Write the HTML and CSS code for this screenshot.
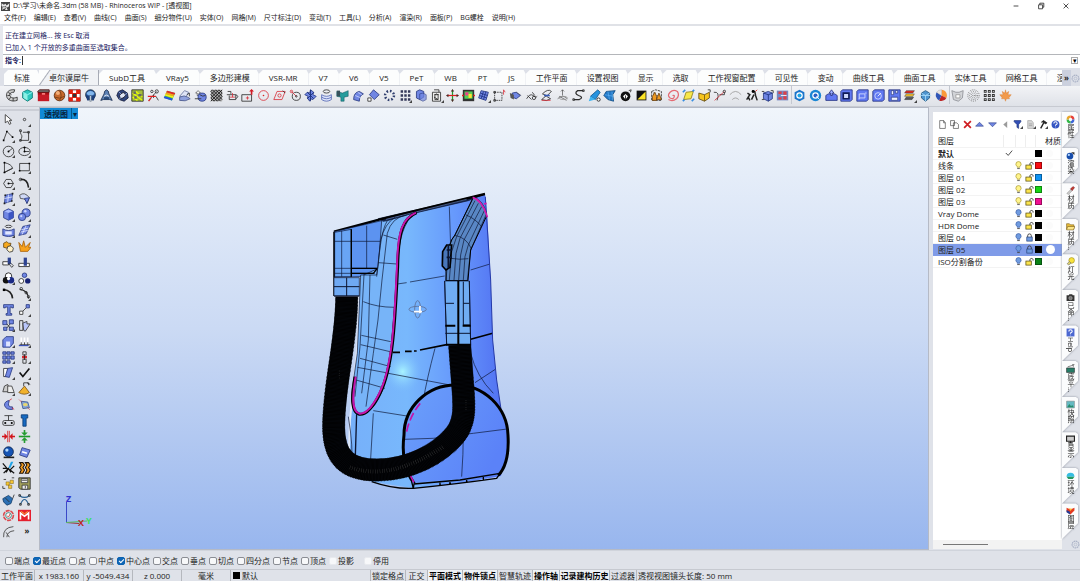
FILE: index.html
```html
<!DOCTYPE html>
<html lang="zh-CN">
<head>
  <meta charset="UTF-8" />
  <meta name="viewport" content="width=device-width, initial-scale=1" />
  <title>Rhinoceros WIP</title>
  <link rel="stylesheet" href="styles.css">
</head>
<body>
  <!-- Shared icons -->
  <svg class="sprite">
    <symbol id="bulb-on" viewBox="0 0 8 10"><path d="M2.500 7V6C1 5 1 4 1 3.500a3 3 0 0 1 6 0C7 4 7 5 5.500 6v1z" fill="#fff48a" stroke="#a89630" stroke-width=".8"/><path d="M2.500 8.500h3" stroke="#555"/></symbol>
    <symbol id="bulb-off" viewBox="0 0 8 10"><path d="M2.500 7V6C1 5 1 4 1 3.500a3 3 0 0 1 6 0C7 4 7 5 5.500 6v1z" fill="#6f9be0" stroke="#3b5fa8" stroke-width=".8"/><path d="M2.500 8.500h3" stroke="#444"/></symbol>
    <symbol id="lock-open" viewBox="0 0 10 10"><path d="M5.500 5V3a1.800 1.800 0 0 1 3.500 0v1" fill="none" stroke="#333"/><rect x="1" y="4.500" width="6" height="4.500" fill="#fbe44c" stroke="#554a10" stroke-width=".8"/></symbol>
    <symbol id="lock-shut" viewBox="0 0 10 10"><path d="M3 5V3a2 2 0 0 1 4 0v2" fill="none" stroke="#333"/><rect x="2" y="4.500" width="6" height="4.500" fill="#6f9be0" stroke="#2c4780" stroke-width=".8"/></symbol>
    <symbol id="gear" viewBox="0 0 16 16"><circle cx="8" cy="8" r="6" fill="none" stroke="#aab2c6" stroke-width="2" stroke-dasharray="3 1"/><circle cx="8" cy="8" r="2.500" fill="none" stroke="#aab2c6"/></symbol>
  </svg>

  <header class="titlebar">
    <svg class="logo" viewBox="0 0 16 16"><rect width="16" height="16" fill="#444"/><path d="M1 2l4 3 3-2 2 3 5-4-1 6-4 2 2 4H8l-2-3-4 3 1-5-2-2z" fill="#e8e8e8"/><path d="M3 8l3 1 2-2 1 3-2 3" fill="none" stroke="#111"/></svg>
    <h1>D:\学习\未命名.3dm (58 MB) - Rhinoceros WIP - [透视图]</h1>
    <div class="window-buttons">
      <button aria-label="最小化"><svg viewBox="0 0 10 10"><path d="M2 5h6"/></svg></button>
      <button aria-label="还原"><svg viewBox="0 0 10 10"><path d="M2 3.500h5v5H2zM3.500 3.500v-2h5v5H7"/></svg></button>
      <button aria-label="关闭"><svg viewBox="0 0 10 10"><path d="M2 2l6 6M8 2L2 8"/></svg></button>
    </div>
  </header>

  <nav class="menubar">
    <a href="#">文件(F)</a><a href="#">编辑(E)</a><a href="#">查看(V)</a><a href="#">曲线(C)</a><a href="#">曲面(S)</a><a href="#">细分物件(U)</a><a href="#">实体(O)</a><a href="#">网格(M)</a><a href="#">尺寸标注(D)</a><a href="#">变动(T)</a><a href="#">工具(L)</a><a href="#">分析(A)</a><a href="#">渲染(R)</a><a href="#">面板(P)</a><a href="#">BG螺栓</a><a href="#">说明(H)</a>
  </nav>

  <section class="command">
    <p>正在建立网格... 按 Esc 取消</p>
    <p>已加入 1 个开放的多重曲面至选取集合。</p>
    <div class="prompt">
      <label for="command-input">指令:</label>
      <input type="text" id="command-input" autocomplete="off" />
      <button aria-label="滚动">▾</button>
    </div>
  </section>

  <div class="tabs">
    <div class="tab-list">
      <button class="cjk">标准</button>
      <button class="cjk active">卓尔谟犀牛</button>
      <button>SubD工具</button>
      <button>VRay5</button>
      <button class="cjk">多边形建模</button>
      <button>VSR-MR</button>
      <button>V7</button>
      <button>V6</button>
      <button>V5</button>
      <button>PeT</button>
      <button>WB</button>
      <button>PT</button>
      <button>JS</button>
      <button class="cjk">工作平面</button>
      <button class="cjk">设置视图</button>
      <button class="cjk">显示</button>
      <button class="cjk">选取</button>
      <button class="cjk">工作视窗配置</button>
      <button class="cjk">可见性</button>
      <button class="cjk">变动</button>
      <button class="cjk">曲线工具</button>
      <button class="cjk">曲面工具</button>
      <button class="cjk">实体工具</button>
      <button class="cjk">网格工具</button>
      <button class="cjk">渲染</button>
    </div>
    <button class="tabs-more">»</button>
    <button class="tabs-gear" aria-label="选项"><svg><use href="#gear"/></svg></button>
  </div>

  <div class="toolbar">
    <div class="group group-main">
      <button><svg viewBox="0 0 16 16"><path class="k" d="M12 1C5 0 1 4 2 9c1 5 7 7 13 5v-4c-4 2-8 1-9-2-1-2 1-4 5-4z" fill="#ccc"/><path class="k" d="M4 4l4 3M3 8l3 0M5 13l2-3M10 11v4"/></svg></button>
      <button><svg viewBox="0 0 16 16"><path d="M8 1l6 3v7l-6 4-6-4V4z" fill="#2cc7bd" stroke="#08746f"/><path d="M2 4l6 3 6-3" fill="none" stroke="#aff"/><path d="M3 5l5 2v7l-5-3z" fill="#8ff0e4"/></svg></button>
      <button><svg viewBox="0 0 16 16"><path d="M1 3h14v12H1z" fill="#c51a26"/><path d="M1 3l2-2h12v3H1z" fill="#777" stroke="#400"/><path d="M1 6h14" stroke="#800"/><rect x="6" y="5" width="4" height="2" fill="#ff8080"/></svg></button>
      <button><svg viewBox="0 0 16 16"><circle cx="8" cy="8" r="6.500" fill="#c7692d" stroke="#5a2a0a"/><circle cx="6" cy="5" r="2.500" fill="#f3ae78"/><path d="M2 10q6 3 12-1M8 2q4 6 0 12" stroke="#743b14" fill="none"/></svg></button>
      <button><svg viewBox="0 0 16 16"><path d="M1 1h14v14H1z" fill="#fff" stroke="#500"/><path d="M1 1h5v4h4V1h5v5h-4v4h4v5h-5v-4H6v4H1v-5h4V6H1z" fill="#e4200e"/><path d="M6 6h4v4H6z" fill="#333"/></svg></button>
      <button><svg viewBox="0 0 16 16"><circle cx="8" cy="7" r="6" fill="#2b5fa8" stroke="#123"/><path d="M3 5q5-5 10 0l-2 3H5z" fill="#83b7ec"/><path d="M2 8h4v6H4zM10 8h4l-2 6h-2z" fill="#1d3e78"/><path d="M7 8h2v7H7z" stroke="#123" stroke-width=".5" fill="#dce9f8"/></svg></button>
      <button><svg viewBox="0 0 16 16"><path d="M8 1q3 1 3 5l4 8-3-1H4l-3 1 4-8q0-4 3-5z" fill="#5b80b4" stroke="#12264a"/><path d="M5 9q3-3 6 0" stroke="#fff" fill="none"/><path d="M5 10h6v3H5z" fill="#274775"/></svg></button>
      <button><svg viewBox="0 0 16 16"><path d="M3 3l5-2 6 4 1 6-5 4-6-2-3-5z" fill="#31467e" stroke="#121a38"/><ellipse cx="8" cy="8" rx="4" ry="3" transform="rotate(-40 8 8)" fill="#dfe6f5" stroke="#112"/><path d="M3 3l3 3M14 5l-3 2M4 13l2-3" stroke="#9ab1e8"/></svg></button>
      <button><svg viewBox="0 0 16 16"><path d="M1 1h14v14H1z" fill="#a5bd3c" stroke="#222"/><path d="M2 5l12 9M6 3l8 7M2 10l6 4" stroke="#ef0" stroke-width="1.500"/><path d="M3 3h3v3H3zM9 6h4v3H9zM4 9h3v3H4z" fill="#666"/></svg></button>
      <button><svg viewBox="0 0 16 16"><path class="k" d="M2 14L12 3M8 7v4M11 9l3 5"/><path d="M1 9h10M5 11l-3 4" stroke="#e02020" stroke-width="1.500"/><circle class="k" cx="12" cy="3" r="2"/><circle class="k" cx="6" cy="3" r="1.500"/></svg></button>
      <button><svg viewBox="0 0 16 16"><path d="M5 2l10 3-4 9L1 11z" fill="#39ca42"/><path d="M5 2l10 3-1 2L4 4z" fill="#e9202c"/><path d="M4 4l10 3-1 2L3 6z" fill="#ff9b18"/><path d="M3 6l10 3-1 2L2 8z" fill="#f4ec20"/><path d="M2 9l10 3-1 2-10-3z" fill="#274ce8"/></svg></button>
      <button><svg viewBox="0 0 16 16"><path d="M2 9l6-7 5 2-4 7z" fill="#dfe5f6" stroke="#66749d"/><path d="M2 10q6-3 10 0l3 2q-6 4-13 2z" fill="#8fa1dd" stroke="#4c5a8a"/><path d="M11 7l3-2v4" class="k"/></svg></button>
      <button><svg viewBox="0 0 16 16"><path d="M2 5l3-3 3 3H6v3H4V5z" fill="#fff" stroke="#222" stroke-width=".7"/><circle class="b" cx="10" cy="10" r="5"/><path class="k" d="M1 12h8M7 7q4 3 7 1"/></svg></button>
      <button><svg viewBox="0 0 16 16"><path d="M1 1h14v14H1z" fill="#aaa"/><path d="M1 3L3 1M1 7l6-6M1 11L11 1M1 15L15 1M5 15L15 5M9 15l6-6M1 11l4 4M1 7l8 8M1 3l12 12M3 1l12 12M7 1l8 8M11 1l4 4" stroke="#111"/></svg></button>
      <button><svg viewBox="0 0 16 16"><path class="k" d="M2 3h4v3M1 7h11v6H4V8M12 7q5 2 0 5"/><path class="r" d="M5 10h6M8 5v5"/></svg></button>
      <button><svg viewBox="0 0 16 16"><path class="k" d="M1 7h12v8H1z"/><path class="r" d="M6 11h4M8 9v4"/><path d="M12 7V3h-2l3-3 3 3h-2v4z" fill="#d31925"/></svg></button>
      <button><svg viewBox="0 0 16 16"><circle class="r" cx="8" cy="8" r="6"/><circle cx="8" cy="8" r="1" fill="#d22"/></svg></button>
      <button><svg viewBox="0 0 16 16"><path class="r" d="M5 3h10l-4 10H1z"/><circle class="r" cx="8" cy="8" r="2"/><path class="k" d="M12 2l3 3"/></svg></button>
      <button><svg viewBox="0 0 16 16"><circle class="k" cx="9" cy="9" r="5"/><path class="r" d="M3 3l6 6"/><circle class="r" cx="3" cy="3" r="1.500"/><circle class="k" cx="9" cy="9" r="1"/></svg></button>
      <button><svg viewBox="0 0 16 16"><path class="b" d="M8 1l4 3-1 3 4 2-4 4-3-1-1 3-3-4 1-2-4-2 3-3 3 1z"/><path d="M4 4l8 8M12 4l-8 8M8 1v14" stroke="#152a75"/></svg></button>
      <button><svg viewBox="0 0 16 16"><ellipse class="k" cx="8" cy="3" rx="4" ry="2"/><path d="M2 7q6 4 12 0v6q-6 4-12 0z" fill="#dce3fb" stroke="#5266b3"/><path d="M2 10q6 4 12 0" stroke="#5266b3" fill="none"/></svg></button>
      <button><svg viewBox="0 0 16 16"><path d="M1 3l7 2 7-3v7l-5 1v5H6v-5l-5-1z" fill="#269c9c" stroke="#0a4f59" stroke-width=".6"/><path d="M1 2h4v7H1z" fill="#37525c"/></svg></button>
      <button><svg viewBox="0 0 16 16"><path class="b" d="M2 13q0-9 7-10l5 3q-5 2-5 9z"/><path d="M4 8l7 3M7 4l5 3" stroke="#cbd5ff"/></svg></button>
      <button><svg viewBox="0 0 16 16"><path class="b" d="M8 1l7 6-6 6-6-6z"/><path class="k" d="M1 11h4v4H1z" fill="#fff"/></svg></button>
      <button><svg viewBox="0 0 16 16"><circle cx="8" cy="8" r="5.500" fill="none" stroke="#31406f" stroke-width="3" stroke-dasharray="2 2.300"/></svg></button>
      <button class="more"><svg viewBox="0 0 16 16"><path d="M2 3h12M2 8h12M2 13h12" stroke="#34395a" stroke-width="3" stroke-dasharray="3 1.500"/></svg></button>
      <button><svg viewBox="0 0 16 16"><path class="b" d="M3 3l4-2 5 2v7l-5 3-4-2z"/><path class="b" d="M7 6l4-1 4 2v6l-4 2-4-2z" opacity=".7"/></svg></button>
      <button class="more"><svg viewBox="0 0 16 16"><path class="k" d="M3 4h10v11H3zM5 1h6v3M6 8q2-4 4 0v5H6z" fill="#eee"/><path d="M5 7h6M5 10l5 3" stroke="#222"/></svg></button>
      <button><svg viewBox="0 0 16 16"><path d="M8 1v14" stroke="#219b2c" stroke-width="1.500"/><path d="M1 8h14" stroke="#db2222" stroke-width="1.500"/><path d="M8 0l2 3H6zM8 16l2-3H6zM0 8l3-2v4zM16 8l-3-2v4z" fill="#4c2a25"/></svg></button>
      <button><svg viewBox="0 0 16 16"><path d="M1 1h14v14H1z" fill="#333"/><path d="M3 3h10v9H3z" fill="#51d156"/><path d="M4 4h4v4H4z" fill="#ee3f8c"/><path d="M8 6h4v5H8z" fill="#ffe137"/><path d="M0 7h2v2H0zM14 7h2v2h-2z" fill="#e22"/></svg></button>
      <button class="more"><svg viewBox="0 0 16 16"><path class="b" d="M5 2l9 2-3 10-9-3z"/><path d="M4 5l9 3M3 8l9 3M8 3l-3 9M11 3L8 13" stroke="#1f3183"/></svg></button>
      <button><svg viewBox="0 0 16 16"><path class="k" d="M2 4h9v10H2z" stroke-dasharray="2 1"/><path class="k" d="M1 3h2v2H1zM1 13h2v2H1z"/><path class="r" d="M13 1v6M13 1l2 3"/></svg></button>
      <button><svg viewBox="0 0 16 16"><path class="b" d="M4 5l5-1 5 4-5 4-5-2z"/><path d="M1 5l5 2v6l-4-2z" fill="#555"/><path class="k" d="M9 4l6 4" opacity=".5"/></svg></button>
      <button><svg viewBox="0 0 16 16"><path class="k" d="M2 12q4-7 8-4t5 1M3 8l5 5M9 4l3 4"/><circle class="k" cx="11" cy="11" r="2"/></svg></button>
      <button><svg viewBox="0 0 16 16"><path class="k" d="M3 6q7-7 11-3L8 9l5 3q-5 4-11 1l6-5z"/><path class="r" d="M2 14h11"/><path d="M5 8h7" stroke="#345cba" stroke-width="2"/></svg></button>
      <button><svg viewBox="0 0 16 16"><path class="k" d="M8 1v7M6 3l2-2 2 2M2 12q6-6 12 0M4 9l9 5" opacity=".7"/><ellipse cx="9" cy="11" rx="5" ry="2" fill="none" stroke="#999"/></svg></button>
      <button><svg viewBox="0 0 16 16"><path class="k" d="M14 2H7Q2 5 8 8q7 2 1 5H2" stroke-width="1.500"/><path class="k" d="M13 1h2v2h-2zM1 12h2v2H1z"/></svg></button>
      <button><svg viewBox="0 0 16 16"><path d="M12 1l3 3-6 9-6-4z" fill="#2492df" stroke="#12588c"/><path d="M3 9l6 4-8 2z" fill="#3cb3f2"/><circle cx="13" cy="13" r="2" fill="#fff" stroke="#111"/></svg></button>
      <button><svg viewBox="0 0 16 16"><path d="M4 3l11-1-3 5 1 8-7-2-5-5z" fill="#2379c8" stroke="#0e477e"/><path d="M2 7l11 2M6 3l2 10M11 3l1 11" stroke="#77c5ff" stroke-width=".6"/></svg></button>
      <button><svg viewBox="0 0 16 16"><circle cx="8" cy="9" r="6" fill="#111"/><path d="M5 9l3-3 3 3-3 4z" fill="#fff"/><path d="M8 8v5" stroke="#111"/><path class="k" d="M12 2l3-1-1 3"/></svg></button>
      <button><svg viewBox="0 0 16 16"><path d="M2 2h12v12H2z" fill="#111"/><path d="M13 3v10H3z" fill="#fbe326"/></svg></button>
      <button><svg viewBox="0 0 16 16"><path class="k" d="M2 3l5-2 7 2v11H2zM5 8h5M5 4v4" stroke-dasharray="3 1"/><path d="M3 9l3-5 2 5v5H3zM11 5l3 8H8z" fill="#ef9a22" stroke="#6c4110"/></svg></button>
      <button><svg viewBox="0 0 16 16"><path d="M8 8q3-1 2 2t-5 1q-4-3 0-7t9-1q3 5-1 9-5 4-10 1" fill="none" stroke="#e46a73" stroke-width="1.500"/></svg></button>
      <button><svg viewBox="0 0 16 16"><path d="M5 4l9-1-3 9-9 1z" fill="#f7e74a" stroke="#8b7b18"/><path d="M1 4l3-3M12 15l3-3M1 15l2-2M13 3l2-2" stroke="#398ee1" stroke-width="2"/></svg></button>
      <button><svg viewBox="0 0 16 16"><path d="M1 5l7 2 6-3v7l-6 4-7-3z" fill="#f6c51f" stroke="#5f4812"/><path d="M8 7v8" stroke="#6f5612"/><path class="k" d="M12 1h3v3"/></svg></button>
      <button><svg viewBox="0 0 16 16"><path class="k" d="M1 4q8-1 4 10M8 7h6v-3"/><path class="r" d="M2 14L14 3"/><circle class="k" cx="14" cy="3" r="1.500"/></svg></button>
      <button><svg viewBox="0 0 16 16"><path d="M1 7q7-8 14 0M4 13q4-4 8 0" fill="none" stroke="#999"/></svg></button>
      <button><svg viewBox="0 0 16 16"><path d="M3 5l3 2-2 3 2 4M6 7L2 13M9 3h3l1 5 2 6M11 7l-3 6" fill="none" stroke="#222" stroke-width="1.800"/><circle cx="10" cy="3" r="1.800"/><path d="M13 3l2-2" stroke="#d22"/></svg></button>
      <button><svg viewBox="0 0 16 16"><path class="b" d="M3 5l6-2 5 2v7l-5 3-6-3z"/><path d="M3 5l6 2 5-2M9 7v8" stroke="#172c78" fill="none"/><path class="k" d="M1 3h3M12 2h3v3M1 13h3"/></svg></button>
      <button><svg viewBox="0 0 16 16"><path d="M1 2h14v12H1z" fill="#7489c4"/><path d="M3 3h4v3H3zM3 10h4v3H3zM9 3h4v4H9zM9 9h4v4H9z" fill="#dd4048"/><path d="M6 8h7" stroke="#fff"/></svg></button>
    </div>
    <div class="group group-solid">
      <button><svg viewBox="0 0 16 16"><path d="M8 1l6 3v8l-6 3-6-3V4z" fill="#1b75cb"/><circle cx="8" cy="8" r="4" fill="#fff"/><circle cx="8" cy="8" r="2.500" fill="#1fa4e4"/></svg></button>
      <button><svg viewBox="0 0 16 16"><circle cx="8" cy="8" r="7" fill="#1b86d4"/><circle cx="8" cy="8" r="4" fill="#fff"/><circle cx="8" cy="8" r="2.500" fill="#2a5fc5"/><path d="M9 9l4 4" stroke="#fff"/></svg></button>
      <button><svg viewBox="0 0 16 16"><path class="v" d="M1 8l3-2h8l3 2v6H1z"/><path d="M8 1l3 4H9v3H7V5H5z" fill="#9fb0ff" stroke="#27347f"/></svg></button>
      <button><svg viewBox="0 0 16 16"><path class="v" d="M1 3l2-2h12v12l-2 2H1z"/><path d="M4 5h7v7H4z" fill="#cdd8fb" stroke="#111b58" stroke-width="2"/></svg></button>
      <button><svg viewBox="0 0 16 16"><path class="v" d="M1 3l2-2h12v12l-2 2H1z"/><path d="M4 6h7v5H4z" fill="none" stroke="#dce3ff"/><path d="M3 12h2M11 5h2" stroke="#dce3ff"/></svg></button>
      <button><svg viewBox="0 0 16 16"><path class="v" d="M1 3l2-2h12v12l-2 2H1z"/><circle cx="7.500" cy="8.500" r="4" fill="none" stroke="#dce3ff"/><path d="M7 9l4-4" stroke="#fff"/></svg></button>
      <button><svg viewBox="0 0 16 16"><path class="v" d="M1 1h14v14H1z"/><path d="M4 2h3v5H4zM9 2h3v3H9zM4 10h8v4H4z" fill="#eef1ff" stroke="#34428d"/></svg></button>
      <button class="more"><svg viewBox="0 0 16 16"><path d="M4 2h10l-2 3H2z" fill="#e02a21" stroke="#333" stroke-width=".6"/><path d="M4 6h10l-2 3H2z" fill="#f5c52d" stroke="#333" stroke-width=".6"/><path d="M4 10h9l-2 3H2z" fill="#555" stroke="#222" stroke-width=".6"/></svg></button>
      <button><svg viewBox="0 0 16 16"><path d="M3 5l5-3 5 3v6l-5 4-5-4z" fill="#4d94cf" stroke="#23577f"/><path d="M1 8h14M3 5l5 3 5-3M8 8v7" stroke="#a7dbfb" fill="none"/></svg></button>
      <button><svg viewBox="0 0 16 16"><path d="M8 8V1a7 7 0 0 1 6 10z" fill="#fa9839"/><path d="M8 8l6 3A7 7 0 0 1 5 14z" fill="#bd2526"/><path d="M8 8l-3 6A7 7 0 0 1 2 4z" fill="#3156b7"/><path d="M8 8L2 4a7 7 0 0 1 6-3z" fill="#e9e3df" stroke="#aaa" stroke-width=".5"/></svg></button>
    </div>
    <div class="group group-extra">
      <button><svg viewBox="0 0 16 16"><path d="M1 2l5 2h4l5-2-1 9-5 4-6-2z" fill="#d2d4d8" stroke="#8b8e94"/><path d="M6 7h5v4H6z" fill="#fff" stroke="#999"/></svg></button>
      <button><svg viewBox="0 0 16 16" fill="none" stroke="#555" stroke-dasharray="1 1.500"><circle cx="8" cy="8" r="7"/><circle cx="8" cy="8" r="5"/><circle cx="8" cy="8" r="3"/><circle cx="8" cy="8" r="1"/></svg></button>
      <button><svg viewBox="0 0 16 16"><path d="M1 3h14M1 8h14M1 13h14" stroke="#333" stroke-width="3.500" stroke-dasharray="3.500 1.500"/><path d="M2 3h13M2 8h13M2 13h13" stroke="#ddd" stroke-dasharray="1.500 3.500"/></svg></button>
      <button><svg viewBox="0 0 16 16"><path d="M8 1l1 4 3-2-1 4h4l-3 4 1 1-4 0-1 3-1-3-4 0 1-1-3-4h4L4 3l3 2z" fill="#f29a4b" stroke="#d77929" stroke-width=".5"/></svg></button>
    </div>
    <div class="group-rest"></div>
  </div>

  <main class="workspace">
    <div class="side-tools">
      <button><svg viewBox="0 0 16 16"><path class="k" d="M4 2v10l3-2 2 4 2-1-2-4h3z" fill="#fff"/></svg></button>
      <button class="more"><svg viewBox="0 0 16 16"><circle class="k" cx="8" cy="8" r="1.500"/></svg></button>

      <button class="more"><svg viewBox="0 0 16 16"><path class="k" d="M2 14L6 3l7 7"/><path d="M1 13h2v2H1zM5 2h2v2H5zM12 9h2v2h-2z"/></svg></button>
      <button class="more"><svg viewBox="0 0 16 16"><path class="k" d="M4 2q-2 3 0 5t-1 7h10V4H6"/><path class="k" d="M2 1h2v2H2zM12 3h2v2h-2zM2 13h2v2H2z"/></svg></button>

      <button class="more"><svg viewBox="0 0 16 16"><circle class="k" cx="8" cy="8" r="6.500"/><path class="k" d="M8 8l5-4"/><circle cx="8" cy="8" r="1.200"/></svg></button>
      <button class="more"><svg viewBox="0 0 16 16"><ellipse class="k" cx="8" cy="8" rx="7" ry="5"/><path class="k" d="M8 8h6M8 8V3"/><circle cx="8" cy="8" r="1.200"/><circle cx="8" cy="3" r="1.200"/></svg></button>

      <button class="more"><svg viewBox="0 0 16 16"><path class="k" d="M3 14V2q9 2 10 7zM3 14l10-5"/><circle cx="3" cy="2" r="1.200"/><circle cx="3" cy="14" r="1.200"/></svg></button>
      <button class="more"><svg viewBox="0 0 16 16"><path class="k" d="M2 3h12v9H2z"/><path d="M1 11h2v2H1zM13 2h2v2h-2z"/></svg></button>

      <button class="more"><svg viewBox="0 0 16 16"><path class="k" d="M5 3h6l3 5-3 5H5L2 8zM8 8h6"/><circle cx="8" cy="8" r="1.200"/></svg></button>
      <button class="more"><svg viewBox="0 0 16 16"><path d="M3 3q9-1 10 10" fill="none" stroke="#222" stroke-width="2"/><circle class="k" cx="3" cy="3" r="1.500"/></svg></button>

      <button class="more"><svg viewBox="0 0 16 16"><path class="b" d="M4 4l9-2-1 9-9 3z"/><path d="M3 8l10-2M8 3l-1 10" stroke="#dfe6ff"/><path d="M3 3h2v2H3zM12 1h2v2h-2zM2 13h2v2H2zM11 10h2v2h-2z" fill="#222"/></svg></button>
      <button class="more"><svg viewBox="0 0 16 16"><path d="M2 4q6-5 12 3l-3 7q0-6-8-6z" fill="#cfd8f6" stroke="#444"/><path class="b" d="M8 8l6-1-3 7z"/></svg></button>

      <button class="more"><svg viewBox="0 0 16 16"><path class="b" d="M2 4l6-3 6 3v8l-6 3-6-3z"/><path d="M3 4l5 2 5-2-5-2z" fill="#a9bcff"/><path d="M8 6l6-2v8l-6 3z" fill="#3a54c4"/></svg></button>
      <button class="more"><svg viewBox="0 0 16 16"><circle class="b" cx="10" cy="6" r="5"/><circle class="b" cx="5" cy="11" r="4.500"/><circle cx="9" cy="4" r="1.500" fill="#cbd6ff"/><circle cx="4" cy="10" r="1.300" fill="#cbd6ff"/></svg></button>

      <button class="more"><svg viewBox="0 0 16 16"><ellipse class="k" cx="8" cy="3" rx="4" ry="1.500"/><path class="b" d="M1 6q7 4 14 0v8q-7 3-14 0z"/><path d="M4 9h8v4H4z" fill="#e2e8ff"/></svg></button>
      <button class="more"><svg viewBox="0 0 16 16"><path class="b" d="M6 3l9-2-5 11-9 2z"/><path d="M4 7l9-2M3 10l9-2M10 2L5 13" stroke="#e1e6ff"/></svg></button>

      <button><svg viewBox="0 0 16 16"><path d="M2 4l4-2 2 2h3l-1 4-4 2-4-1z" fill="#f6a81d" stroke="#694910"/><path d="M7 8l4-1 3 3-1 4-4 1-3-3z" fill="#fff0c6" stroke="#333"/></svg></button>
      <button><svg viewBox="0 0 16 16"><path d="M1 3l4 5 2-7 2 8 6-6-2 6 3 0-4 5H3z" fill="#f8a21c" stroke="#a9620c"/></svg></button>

      <button><svg viewBox="0 0 16 16"><path d="M1 7h7v4H1z" fill="#fff" stroke="#222"/><path d="M7 2h4v8H7z" fill="#2e4492"/><path class="k" d="M8 9l4 5 2-2-4-4"/></svg></button>
      <button><svg viewBox="0 0 16 16"><path d="M1 9h13v4H1z" fill="#fff" stroke="#222"/><path d="M7 2h4v10H7z" fill="#2e4492"/></svg></button>

      <button class="more"><svg viewBox="0 0 16 16"><circle cx="8" cy="5" r="4" fill="#fff" stroke="#111"/><circle cx="5" cy="10" r="4" fill="#111"/><circle cx="11" cy="10" r="4" fill="#1b2a85"/><circle cx="8" cy="8" r="2" fill="#fff"/></svg></button>
      <button><svg viewBox="0 0 16 16"><circle class="b" cx="8" cy="4" r="2.800"/><circle cx="4" cy="11" r="3" fill="#fff" stroke="#222"/><circle cx="12" cy="11" r="3.300" fill="#172274"/></svg></button>

      <button><svg viewBox="0 0 16 16"><path d="M2 3q10 1 11 11" fill="none" stroke="#222" stroke-width="2"/><path d="M1 2h3v3H1z"/></svg></button>
      <button class="more"><svg viewBox="0 0 16 16"><path d="M2 3q10 1 11 11" fill="none" stroke="#222" stroke-width="1.500"/><circle class="k" cx="4" cy="2" r="1.500"/><circle class="k" cx="10" cy="7" r="1.500"/><circle class="k" cx="13" cy="12" r="1.500"/></svg></button>

      <button><svg viewBox="0 0 16 16"><path class="b" d="M2 2h12v4h-2V5h-2v8h2v2H5v-2h2V5H4v1H2z"/></svg></button>
      <button class="more"><svg viewBox="0 0 16 16"><path class="k" d="M2 10h4v4H2zM6 10l4-4" fill="#fff"/><path class="b" d="M10 2h4v4h-4z"/></svg></button>

      <button class="more"><svg viewBox="0 0 16 16"><path class="b" d="M1 2h5v5H1zM9 1h5v5H9zM2 10h4v4H2zM9 10h5v4H9z"/><path class="k" d="M6 6l4 5M10 6l-4 5"/></svg></button>
      <button><svg viewBox="0 0 16 16"><path class="k" d="M2 2h4v12H2z"/><path d="M6 5l5-2v3h4l-6 9-2-1z" fill="#b9c6fa" stroke="#333"/></svg></button>

      <button class="more"><svg viewBox="0 0 16 16"><path class="b" d="M1 6l4-4h9v8l-4 5H1z"/><path d="M5 8h5v6H5z" fill="#dfe5ff"/></svg></button>
      <button class="more"><svg viewBox="0 0 16 16"><path d="M4 3v8M8 3v8M12 3v8" stroke="#fff" stroke-width="2"/><path class="k" d="M2 12h13M4 9v3M8 9v3M12 9v3"/><path d="M1 13h12" stroke="#3b52b9" stroke-width="1.500"/></svg></button>

      <button class="more"><svg viewBox="0 0 16 16"><path class="b" d="M1 1h4v3H1zM6 1h4v3H6zM11 1h4v3h-4zM1 6h4v4H1zM6 6h4v4H6zM11 6h4v4h-4zM1 12h4v3H1zM6 12h4v3H6z"/></svg></button>
      <button class="more"><svg viewBox="0 0 16 16"><path class="k" d="M6 1h4v4H6zM6 10h4v5H6z"/><path d="M5 6h6v3H5z" fill="#d32328"/><path d="M8 4v7" stroke="#222"/></svg></button>

      <button class="more"><svg viewBox="0 0 16 16"><path class="k" d="M2 3h5v10H2z" fill="#fff"/><path class="b" d="M7 3l6-1-4 12-5-1z"/></svg></button>
      <button class="more"><svg viewBox="0 0 16 16"><path d="M2 8l4 5L14 3" fill="none" stroke="#111" stroke-width="2"/></svg></button>

      <button class="more"><svg viewBox="0 0 16 16"><path d="M1 12l2-7 4-2 3 9z" fill="#ccc" stroke="#333"/><path d="M7 5l5 0 3 8H7z" fill="#eee" stroke="#333"/></svg></button>
      <button class="more"><svg viewBox="0 0 16 16"><path d="M1 13l7-8 6 8q-6 4-13 0z" fill="#f1b22c" stroke="#7c551a"/><path class="k" d="M7 5V1h6v3M11 1l4 2"/></svg></button>

      <button><svg viewBox="0 0 16 16"><path class="b" d="M9 3q-6 1-6 6 2 6 10 5v-3q-6 0-5-4z"/><path class="r" d="M9 3l3-2M12 12l3 2"/></svg></button>
      <button><svg viewBox="0 0 16 16"><path d="M4 4l8 1 2 7-8 1z" fill="#87a5d9" stroke="#37568c"/><ellipse cx="9" cy="8" rx="3" ry="2" fill="#e7d770"/><path d="M1 2l4 3M11 11l4 4" stroke="#c33" stroke-dasharray="1 1"/></svg></button>

      <button><svg viewBox="0 0 16 16"><path class="k" d="M3 2h10M8 2v6M1 10q0-2 2-2h10q2 0 2 2v2q0 2-2 2H3q-2 0-2-2z"/><circle cx="4" cy="11" r="1.300"/><circle cx="12" cy="11" r="1.300"/></svg></button>
      <button><svg viewBox="0 0 16 16"><path d="M4 1h8v4h-2v10H6V5H4z" fill="#176ac2" stroke="#0a3970"/></svg></button>

      <button><svg viewBox="0 0 16 16"><path d="M7 1v14M9 1v14" stroke="#d72020"/><path d="M0 7h3V4l4 4-4 4V9H0zM16 7h-3V4L9 8l4 4V9h3z" fill="#d3151b"/></svg></button>
      <button><svg viewBox="0 0 16 16"><path d="M1 8h14" stroke="#1e9a2a" stroke-width="2"/><path d="M7 0v3H4l4 4 4-4H9V0zM7 16v-3H4l4-4 4 4H9v3z" fill="#259c30"/></svg></button>

      <button><svg viewBox="0 0 16 16"><circle cx="8" cy="7" r="6" fill="#1553b4" stroke="#0a2148"/><circle cx="6" cy="5" r="2" fill="#b5dbff"/><path d="M2 14h13" stroke="#222" stroke-width="2"/></svg></button>
      <button><svg viewBox="0 0 16 16"><path class="b" d="M5 2l10 3-4 9-9-3z"/><path d="M5 7l6 2" stroke="#fff" stroke-width="2"/></svg></button>

      <button><svg viewBox="0 0 16 16"><path d="M8 8l3-7h3l-4 8z" fill="#22a4e8"/><path d="M1 3l6 7-5 5M15 6l-5 5 5 4M5 14l3-5 3 5M1 9h5" fill="none" stroke="#111" stroke-width="1.500"/></svg></button>
      <button><svg viewBox="0 0 16 16"><path d="M2 2h4l2 3-2 3 2 3-2 4H2l2-4-2-3 2-3zM9 2h4l2 3-2 3 2 3-2 4H9l2-4-2-3 2-3z" fill="#f39d22" stroke="#1c1208" stroke-width="1.300"/></svg></button>

      <button><svg viewBox="0 0 16 16"><path d="M5 6h4v4H5zM10 4h4v4h-4zM8 10h4v4H8z" fill="#f8c732" stroke="#755910" stroke-width=".6"/><path class="k" d="M1 14v-3M1 14h3M12 1h3M2 3h3"/></svg></button>
      <button><svg viewBox="0 0 16 16"><path d="M1 1h14v14H3l-2-2z" fill="#a2a05a" stroke="#222"/><path d="M4 2h8v5H4zM5 10h7v5H5z" fill="#eee" stroke="#333"/><path d="M5 4h6M9 11v3" stroke="#333"/></svg></button>

      <button><svg viewBox="0 0 16 16"><path d="M1 7l7-4 5 4-2 6-5 2-4-4z" fill="#2b70b4" stroke="#133c69"/><path d="M13 7l2-5M4 6l5 5" class="k"/></svg></button>
      <button><svg viewBox="0 0 16 16"><path d="M2 3q6 5 12 0M3 14q5-12 10 0" fill="none" stroke="#2b6294" stroke-width="1.500"/><path class="k" d="M1 2h2v2H1zM13 2h2v2h-2zM2 13h2v2H2zM12 13h2v2h-2z"/></svg></button>

      <button><svg viewBox="0 0 16 16"><circle cx="8" cy="8" r="6" fill="none" stroke="#db4b50" stroke-width="2" stroke-dasharray="5 1"/><circle cx="8" cy="8" r="3.500" fill="#fff" stroke="#217c75"/><path d="M6 8l2 2 2-4" stroke="#c22" fill="none"/></svg></button>
      <button><svg viewBox="0 0 16 16"><path d="M0 1h16v14H0z" fill="#e51f2d"/><path d="M3 13V5l5 4 5-4v8" fill="none" stroke="#fff" stroke-width="2"/><path d="M4 3l4 3 4-3" fill="none" stroke="#ffd22e"/></svg></button>

      <button><svg viewBox="0 0 16 16"><path d="M2 15Q1 3 14 2M6 15q0-7 9-8M9 15L5 9" fill="none" stroke="#555" stroke-width="1.200"/></svg></button>
      <button class="chevron">»</button>
    </div>

    <section class="viewport">
      <div class="view-label"><span>透视图</span><button aria-label="视图选项">▾</button></div>
      <svg class="scene" viewBox="0 0 888 441">
        <defs>
          <linearGradient id="body" x1="0" x2="1"><stop offset="0" stop-color="#76aef9"/><stop offset=".42" stop-color="#78b8fc"/><stop offset=".7" stop-color="#6698fc"/><stop offset="1" stop-color="#4f6cf0"/></linearGradient>
          <linearGradient id="base" x1="0" x2="1" y2=".5"><stop offset="0" stop-color="#6ba1fb"/><stop offset="1" stop-color="#5b82f8"/></linearGradient>
          <radialGradient id="shine"><stop offset="0" stop-color="#a8f4ff"/><stop offset="1" stop-color="#7abafc" stop-opacity="0"/></radialGradient>
        </defs>
        <g transform="translate(260 72) scale(.3333)" fill="none" stroke="#0b1430" stroke-width="2">
          <path d="M102 155L240 115 555 42 562 110 572 300 578 480 590 600 603 690 625 770 603 888 480 910 340 925 215 905 145 860 150 720 170 540 180 290 102 290z" fill="url(#body)" stroke="none"/>
          <path d="M180 290L172 500 150 720 145 860" stroke="#dfe8f8" stroke-width="6"/>
          <ellipse cx="308" cy="575" rx="58" ry="65" fill="url(#shine)" stroke="none"/>
          <!-- top cap -->
          <path d="M235 116L555 42 505 62 350 98 320 112 250 124z" fill="#1b2b55"/>
          <path d="M102 155L240 118 555 42" stroke="#000" stroke-width="7"/>
          <path d="M258 118L500 58" stroke="#6884bd"/>
          <!-- left block -->
          <path d="M102 155L245 122 235 265 180 290 102 292z" fill="#5c93f0"/>
          <path d="M104 157L154 148V290H104z" fill="#69a5f5"/>
          <path d="M125 152V290M154 148V290M200 137V265M104 184H240M104 265H235M104 280H225" />
          <path d="M154 148V290M102 155V348M154 265H232L220 280H154" stroke="#000" stroke-width="4"/>
          <path d="M102 293H178V348H102z" fill="#6fa9f3"/>
          <path d="M102 320H178M140 293V348M102 348H178" stroke-width="3"/>
          <!-- side strip -->
          <path d="M262 122C245 150 240 200 234 260L230 285H182L172 520 155 640Q153 690 178 703C230 700 260 620 272 520L293 260Q295 140 345 98z" fill="#77b4f8"/>
          <path d="M320 105Q275 112 262 160L246 300 234 420 220 520 198 680M285 112Q255 130 242 180L230 290M210 285L205 480 185 640M192 285L180 500 165 650"/>
          <path d="M250 165L292 178M235 248L290 252M190 365Q230 382 284 382M184 466L272 485M182 494L274 516M180 535L272 560M172 562L268 580M168 600L255 625M220 692L345 712"/>
          <path d="M350 98C310 115 295 150 293 260 285 420 280 560 240 640 215 690 195 705 178 703 155 695 153 660 165 590" stroke="#000" stroke-width="9"/>
          <path d="M348 98C308 115 293 150 291 260 283 420 278 560 238 640 213 690 195 703 178 701 157 695 155 660 167 590" stroke="#c414aa" stroke-width="6"/>
          <!-- body lines -->
          <path d="M448 80L452 200M292 312L320 308M330 306L434 288M512 270L570 252M265 580L455 616M405 505Q380 600 370 660M512 520Q530 590 580 640M525 608L586 568M220 700L210 870M145 710Q160 800 155 860"/>
          <path d="M278 517H300M315 514H335M342 513H350M360 510L440 494M512 478L578 460" stroke="#000" stroke-width="5"/>
          <path d="M556 50L572 300 578 480 590 600 605 700" stroke="#2337a8" stroke-width="3"/>
          <path d="M170 700L165 860M345 712V680" stroke-width="4"/>
          <!-- round base -->
          <path d="M467 615A157 155 0 0 1 624 765C628 830 612 868 595 886L335 910Q302 850 312 765A155 150 0 0 1 467 615z" fill="url(#base)" stroke="none"/>
          <path d="M335 900Q302 850 312 765A155 150 0 0 1 467 615A157 155 0 0 1 624 765C628 830 612 868 595 886" stroke="#000" stroke-width="9"/>
          <path d="M315 778L400 775 520 760 622 747M485 615Q495 760 485 890"/>
          <path d="M600 880L480 900 342 912 340 925Q470 912 590 895zM420 906V918M450 903V914M500 897V908M550 888V900" stroke="#000" stroke-width="4"/>
          <path d="M215 905Q280 928 340 925L330 885 345 910" stroke="#000" stroke-width="4"/>
          <path d="M320 755Q330 705 365 665M330 885L342 908" stroke="#c414aa" stroke-width="5" stroke-dasharray="25 10"/>
          <!-- right pipe -->
          <path d="M520 52Q548 58 560 100L512 210 502 302H438L446 205Q450 180 465 165z" fill="#5987c5"/>
          <path d="M525 62L470 170 455 215 448 300M535 70L480 175 468 220 462 300M545 80L492 180 482 225 476 300M553 92L505 195 495 230 490 300M498 105Q525 115 545 140M464 166Q500 172 515 208M452 235Q480 240 505 236" />
          <path d="M520 52L465 165Q445 185 438 260V302H504L512 210 560 108" stroke="#000" stroke-width="3"/>
          <path d="M518 52Q545 60 560 105L562 112M552 72L560 70" stroke="#d41aae" stroke-width="5"/>
          <path d="M440 195H455L450 262 438 270 427 258 428 215z" fill="#4977ba" stroke="#000" stroke-width="5"/>
          <path d="M445 195V265M440 210H456M440 232H456" stroke-width="5"/>
          <path d="M434 303H508L512 494H440z" fill="#70adf3"/>
          <path d="M434 303L440 494M508 303L512 494M490 305V435H510M436 370H462M436 460H512M490 370H508" stroke-width="3"/>
          <path d="M475 303V494M436 437H466M488 437H512M438 494H512" stroke="#000" stroke-width="6"/>
          <!-- hose -->
          <path d="M140 350C140 480 101 620 101 740 101 840 150 870 230 870 330 870 420 820 465 765 497 725 492 680 490 640L479 495" stroke="#000" stroke-width="67"/>
          <path d="M140 350C140 480 101 620 101 740 101 840 150 870 230 870 330 870 420 820 465 765 497 725 492 680 490 640L479 495" stroke="#05070c" stroke-width="69" stroke-dasharray="2 2"/>
          <path d="M150 862Q270 905 430 800" stroke="#4a4a4a" stroke-width="12" stroke-dasharray="1 6"/>
          <path d="M118 572V600M498 660V690" stroke="#444" stroke-dasharray="2 5"/>
          <!-- orbit cursor -->
          <g stroke="#5b6f96" stroke-width="2.500"><ellipse cx="353" cy="388" rx="26" ry="9"/><ellipse cx="353" cy="388" rx="9" ry="26"/></g>
          <path d="M342 395H366M360 378V400" stroke="#fff" stroke-width="5"/>
        </g>
        <path d="M26.500 394V414.500" stroke="#3a49c8"/>
        <path d="M26 414.500L39 415.500" stroke="#a62f2f"/>
        <path d="M26 414.500L47 413" stroke="#58c069"/>
        <text x="26" y="394" fill="#3333d0">Z</text>
        <text x="38" y="418" fill="#c02828">X</text>
        <text x="46" y="416" fill="#3be05c">Y</text>
      </svg>
    </section>

    <aside class="layers">
      <div class="layer-tools">
        <button><svg viewBox="0 0 16 16"><path class="k" d="M3 1h7l3 4v10H3zM10 1v4h3" fill="#fff"/></svg></button>
        <button><svg viewBox="0 0 16 16"><path class="k" d="M1 1h7v9H1zM6 5h6l3 3v7H6z" fill="#fff"/></svg></button>
        <button><svg viewBox="0 0 16 16"><path d="M2 2l12 12M14 2L2 14" stroke="#cf1d22" stroke-width="3"/></svg></button>
        <button><svg viewBox="0 0 16 16"><path class="b" d="M1 11l7-7 7 7z"/></svg></button>
        <button><svg viewBox="0 0 16 16"><path class="b" d="M1 5l7 7 7-7z"/></svg></button>
        <button><svg viewBox="0 0 16 16"><path d="M11 2L4 8l7 6z" fill="#9b9b9b"/></svg></button>
        <button class="more"><svg viewBox="0 0 16 16"><path d="M2 1h12v2L10 8v7l-3-2V8L2 3z" fill="#3451b7" stroke="#152a72"/></svg></button>
        <button class="more"><svg viewBox="0 0 16 16"><path d="M3 1h7l3 4v10H3z" fill="#d5d5d5" stroke="#999"/><path d="M5 7h6M5 10h6" stroke="#888"/></svg></button>
        <button class="more"><svg viewBox="0 0 16 16"><path d="M4 4l4-3 6 4-2 2-3-2" fill="#222" stroke="#222" stroke-width="1.500"/><path d="M9 4L3 15" stroke="#222" stroke-width="2.500"/></svg></button>
        <button><svg viewBox="0 0 16 16"><circle cx="8" cy="8" r="7" fill="#3555c3"/><path d="M5 6q0-3 3-3t3 3q0 1-3 3v1M8 12v1" fill="none" stroke="#fff" stroke-width="1.800"/></svg></button>
      </div>
      <table>
        <thead>
          <tr><th class="name">图层</th><th></th><th></th><th></th><th></th><th class="mat">材质</th></tr>
        </thead>
        <tbody>
          <tr class="current"><td class="name">默认</td><td><svg class="tick" viewBox="0 0 10 10"><path d="M1 5l3 3 5-6"/></svg></td><td></td><td></td><td><i class="swatch black"></i></td><td><i class="dot"></i></td></tr>
          <tr><td class="name">线条</td><td></td><td><svg class="bulb"><use href="#bulb-on"/></svg></td><td><svg class="lock"><use href="#lock-open"/></svg></td><td><i class="swatch red"></i></td><td><i class="dot"></i></td></tr>
          <tr><td class="name">图层 01</td><td></td><td><svg class="bulb"><use href="#bulb-on"/></svg></td><td><svg class="lock"><use href="#lock-open"/></svg></td><td><i class="swatch blue"></i></td><td><i class="dot"></i></td></tr>
          <tr><td class="name">图层 02</td><td></td><td><svg class="bulb"><use href="#bulb-on"/></svg></td><td><svg class="lock"><use href="#lock-open"/></svg></td><td><i class="swatch lime"></i></td><td><i class="dot"></i></td></tr>
          <tr><td class="name">图层 03</td><td></td><td><svg class="bulb"><use href="#bulb-on"/></svg></td><td><svg class="lock"><use href="#lock-open"/></svg></td><td><i class="swatch pink"></i></td><td><i class="dot"></i></td></tr>
          <tr><td class="name">Vray Dome</td><td></td><td><svg class="bulb"><use href="#bulb-off"/></svg></td><td><svg class="lock"><use href="#lock-open"/></svg></td><td><i class="swatch black"></i></td><td><i class="dot"></i></td></tr>
          <tr><td class="name">HDR Dome</td><td></td><td><svg class="bulb"><use href="#bulb-off"/></svg></td><td><svg class="lock"><use href="#lock-open"/></svg></td><td><i class="swatch black"></i></td><td><i class="dot"></i></td></tr>
          <tr><td class="name">图层 04</td><td></td><td><svg class="bulb"><use href="#bulb-off"/></svg></td><td><svg class="lock"><use href="#lock-shut"/></svg></td><td><i class="swatch black"></i></td><td><i class="dot"></i></td></tr>
          <tr class="selected"><td class="name">图层 05</td><td></td><td><svg class="bulb"><use href="#bulb-off"/></svg></td><td><svg class="lock"><use href="#lock-shut"/></svg></td><td><i class="swatch black"></i></td><td><i class="dot"></i></td></tr>
          <tr><td class="name">ISO分割备份</td><td></td><td><svg class="bulb"><use href="#bulb-off"/></svg></td><td><svg class="lock"><use href="#lock-open"/></svg></td><td><i class="swatch green"></i></td><td><i class="dot"></i></td></tr>
        </tbody>
      </table>
      <div class="scrollbar"><i></i></div>
    </aside>

    <div class="panel-tabs">
      <div class="panel-list">
        <button><svg viewBox="0 0 16 16" fill="none" stroke-width="4"><path d="M8 3a5 5 0 0 1 5 5" stroke="#e8403a"/><path d="M13 8a5 5 0 0 1-5 5" stroke="#3f66d8"/><path d="M8 13a5 5 0 0 1-5-5" stroke="#34b84a"/><path d="M3 8a5 5 0 0 1 5-5" stroke="#e9a52c"/></svg><span>属性</span></button>
        <button><svg viewBox="0 0 16 16"><circle cx="7" cy="9" r="6" fill="#174dab"/><circle cx="5" cy="7" r="2" fill="#b6d8ff"/><path d="M9 2h6v5z" fill="#333"/></svg><span>渲染</span></button>
        <button><svg viewBox="0 0 16 16"><path d="M2 13l7-7 2 2-7 7z" fill="#ddd" stroke="#666"/><path d="M8 5l5-4 2 2-4 5z" fill="#c83c2c" stroke="#712"/></svg><span>材质</span></button>
        <button><svg viewBox="0 0 16 16"><path d="M1 3h5l2 2h6v8H1z" fill="#e6bb3a" stroke="#765a16"/><path d="M3 8h13l-3 6H1z" fill="#fbe589" stroke="#765a16"/></svg><span>材质…</span></button>
        <button><svg viewBox="0 0 16 16"><circle cx="10" cy="6" r="5" fill="#f8e33c" stroke="#96841e"/><path d="M6 8l-4 4 3 2 4-3z" fill="#ded26b" stroke="#666"/></svg><span>灯光</span></button>
        <button><svg viewBox="0 0 16 16"><path d="M1 4h4l1-2h5l1 2h3v10H1z" fill="#333"/><circle cx="8" cy="9" r="3" fill="#777" stroke="#bbb"/></svg><span>已命…</span></button>
        <button><svg viewBox="0 0 16 16"><path d="M1 1h14v14H1z" fill="#4c68d1"/><path d="M5 6q0-3 3-3t3 3q0 1-3 3v1M8 12v1" fill="none" stroke="#fff" stroke-width="2"/></svg><span>Help</span></button>
        <button><svg viewBox="0 0 16 16"><path d="M1 7h14v8H1z" fill="#267c67" stroke="#222"/><path class="k" d="M3 5l10-3v3M11 1h4"/></svg><span>底平…</span></button>
        <button><svg viewBox="0 0 16 16"><path d="M1 2h14v12H1z" fill="#64b9c2" stroke="#888"/><path d="M2 13l4-6 3 4 2-2 3 4z" fill="#258b6b"/></svg><span>快照</span></button>
        <button><svg viewBox="0 0 16 16"><path d="M1 2h14v9H1z" fill="#ccc" stroke="#222" stroke-width="2"/><path d="M4 14h8M8 11v3" stroke="#222" stroke-width="2"/></svg><span>显示</span></button>
        <button><svg viewBox="0 0 16 16"><path d="M1 10a7 7 0 0 1 14 0z" fill="#35bde2"/><path d="M1 10h14l-3 4H4z" fill="#249760"/></svg><span>环境</span></button>
        <button class="active"><svg viewBox="0 0 16 16"><path d="M1 3l7 3 7-3v5l-7 7-7-5z" fill="#e33a21"/><path d="M1 7l6 3v5L1 11z" fill="#213c97"/><path d="M5 4l6 1-3 4z" fill="#ffc33c"/></svg><span>图层</span></button>
      </div>
      <button class="panel-gear" aria-label="面板选项"><svg><use href="#gear"/></svg></button>
    </div>
  </main>

  <form class="osnap">
    <label><input type="checkbox" />端点</label>
    <label><input type="checkbox" checked />最近点</label>
    <label><input type="checkbox" />点</label>
    <label><input type="checkbox" />中点</label>
    <label><input type="checkbox" checked />中心点</label>
    <label><input type="checkbox" />交点</label>
    <label><input type="checkbox" />垂点</label>
    <label><input type="checkbox" />切点</label>
    <label><input type="checkbox" />四分点</label>
    <label><input type="checkbox" />节点</label>
    <label><input type="checkbox" />顶点</label>
    <label class="plain"><input type="checkbox" />投影</label>
    <label class="plain"><input type="checkbox" />停用</label>
  </form>

  <footer class="statusbar">
    <button class="w-plane">工作平面</button>
    <span class="w-coord">x 1983.160</span>
    <span class="w-coord">y -5049.434</span>
    <span class="w-coord">z 0.000</span>
    <button class="w-coord">毫米</button>
    <button class="w-layer"><i class="swatch black"></i>默认</button>
    <button class="w-four">锁定格点</button>
    <button class="w-two">正交</button>
    <button class="w-four on">平面模式</button>
    <button class="w-four on">物件锁点</button>
    <button class="w-four">智慧轨迹</button>
    <button class="w-three on">操作轴</button>
    <button class="w-six on">记录建构历史</button>
    <button class="w-three">过滤器</button>
    <span class="lens">透视视图镜头长度: 50 mm</span>
  </footer>
</body>
</html>
```

FILE: styles.css
```css
* {
  margin: 0; padding: 0; box-sizing: border-box;
}
body {
  height: 100vh;
  display: flex;
  flex-direction: column;
  overflow: hidden;
  background-color: #dfe2e9;
  color: #222;
  font-family: "Open Sans", "Noto Sans CJK SC", sans-serif;
  font-size: 8px;
  line-height: 12px;
}
button, input {
  font: inherit;
  color: inherit;
  background: none;
  border: none;
}
button {
  display: flex;
  align-items: center;
  justify-content: center;
  white-space: nowrap;
}
svg { display: block; }
.sprite { display: none; }

/* icon paints */
.k { stroke: #2b2b2b; }
.k:not([fill]) { fill: none; }
.r { stroke: #d8303a; fill: none; }
.b { fill: #7086e3; stroke: #26377f; }
.v { fill: #6179f2; stroke: #26337f; }

/* title and menu */
.titlebar {
  display: flex;
  align-items: center;
  height: 12px;
  padding-left: 1px;
  background: #fff;
}
.logo { width: 9px; height: 9px; margin-right: 3px; }
.titlebar h1 {
  flex: 1;
  font-size: 7px;
  font-weight: normal;
}
.window-buttons { display: flex; margin-right: 2px; }
.window-buttons button { width: 25px; height: 12px; }
.window-buttons svg {
  width: 8px;
  height: 8px;
  fill: none;
  stroke: #222;
}
.menubar {
  display: flex;
  gap: 8px;
  height: 12px;
  padding-left: 4px;
  background: #fff;
  font-size: 7px;
}
.menubar a {
  color: #222;
  text-decoration: none;
}

/* command line */
.command {
  height: 44px;
  padding-top: 4px;
  border-top: 2px solid #e0e2e7;
  border-left: 3px solid #e6e8ee;
  background: #fff;
  color: #23235f;
  font-size: 7px;
}
.command p {
  height: 12px;
  padding-left: 2px;
}
.prompt {
  display: flex;
  align-items: center;
  height: 12px;
  padding-left: 2px;
  border-top: 1px solid #b4b6ba;
}
.prompt label { font-weight: 600; }
.prompt input {
  flex: 1;
  height: 9px;
  margin-left: 1px;
  border-left: 1px solid #333;
  outline: none;
}
.prompt button {
  width: 7px;
  height: 7px;
  margin-right: 2px;
  border: 1px solid #aaa;
  color: #000;
}

/* toolbar tabs */
.tabs {
  display: flex;
  height: 18px;
  padding: 2px 0 0 4px;
  background: #dde0e8;
}
.tab-list {
  flex: 1;
  display: flex;
  min-width: 0;
  overflow: hidden;
  border-bottom: 1px solid #c3c7cf;
}
.tab-list button {
  flex: none;
  padding: 0 11px 0 10px;
  background: #fcfdfd;
  clip-path: polygon(4px 0, calc(100% - 2px) 0, 100% 4px, 100% 100%, 0 100%, 0 4px);
}
.tab-list .cjk { padding-right: 9px; }
.tab-list .active {
  border-right: 1px solid #a7abb5;
  background: linear-gradient(125deg, #fcfdfd 8px, #a9adb7 9px, #f0f2f5 10px);
  clip-path: none;
}
.tabs-more {
  width: 9px;
  background: #cbd0de;
  font-weight: 700;
}
.tabs-gear { width: 9px; }
.tabs-gear svg, .panel-gear svg { width: 9px; height: 9px; }

.toolbar {
  display: flex;
  height: 21px;
  padding: 0 4px;
  border-bottom: 1px solid #c7cad1;
  background: linear-gradient(#f2f3f6, #dfe2e8);
}
.group {
  display: flex;
  height: 18px;
}
.group button { flex: 1; position: relative; min-width: 0; }
.group svg { width: 13px; height: 13px; flex: none; }
.group-main { flex: 50; }
.group-solid { flex: 10; border-left: 1px solid #c4c8d0; }
.group-extra { flex: 4; border-left: 1px solid #c4c8d0; }
.group-rest { flex: 4; }

.more { position: relative; }
.more::after {
  content: "";
  position: absolute;
  right: 1px;
  bottom: 1px;
  border-left: 3px solid transparent;
  border-bottom: 3px solid #444;
}

/* workspace */
.workspace {
  flex: 1;
  display: flex;
  min-height: 0;
}
.side-tools {
  display: grid;
  grid-template-columns: 16px 16px;
  grid-auto-rows: 1fr;
  width: 39px;
  margin-top: 2px;
  padding: 1px 0 11px;
  border-top: 2px solid #cbced6;
}
.side-tools button { min-height: 0; }
.side-tools svg { width: 13px; height: 13px; }
.side-tools .chevron {
  padding-left: 6px;
  font-weight: 700;
}
.viewport {
  flex: 1;
  position: relative;
  border: 1px solid #b5bac6;
  background: linear-gradient(#f0f5fb, #cbdaf4 50%, #98b6ee);
}
.scene {
  width: 100%;
  height: 100%;
}
.scene text {
  font-size: 9px;
  font-weight: 700;
}
.view-label {
  position: absolute;
  top: 0;
  left: 0;
  display: flex;
  height: 11px;
  line-height: 11px;
  background: #118ad6;
  color: #06243f;
}
.view-label span {
  padding: 0 3px 0 4px;
  font-weight: 600;
}
.view-label button {
  width: 7px;
  border-left: 1px solid #06578c;
}

/* layers panel */
.layers {
  display: flex;
  flex-direction: column;
  width: 129px;
  margin: 5px 0 1px 4px;
  background: #fff;
}
.layer-tools {
  display: flex;
  justify-content: space-between;
  padding: 6px 0 5px 3px;
}
.layer-tools button { width: 12px; height: 12px; }
.layer-tools svg { width: 9px; height: 9px; }
.layers table {
  width: 100%;
  border-collapse: collapse;
  table-layout: fixed;
}
.layers th, .layers td {
  width: 10px;
  height: 12px;
  line-height: 11px;
  border-bottom: 1px solid #f3f3f3;
  text-align: left;
  font-weight: normal;
  white-space: nowrap;
}
.layers th { border-left: 1px solid #eee; }
.layers .name {
  width: auto;
  padding-left: 5px;
  border-left: none;
}
.layers th:nth-child(2) { width: 12px; }
.layers th:last-child { width: 17px; }
.layers .mat { border-left: none; }
.current .name { font-weight: 700; }
.selected td {
  background: #7f9be8;
  border-color: #7f9be8;
}
.tick {
  width: 8px;
  height: 8px;
  margin-left: 2px;
  fill: none;
  stroke: #222;
}
.bulb { width: 7px; height: 9px; }
.lock { width: 9px; height: 9px; }
.swatch {
  display: block;
  width: 7px;
  height: 7px;
  border: 1px solid rgba(0, 0, 0, 0.35);
}
.black { background: #000; }
.red { background: #f80c12; }
.blue { background: #0d93f4; }
.lime { background: #16d316; }
.pink { background: #f00f91; }
.green { background: #0a8117; }
.dot {
  display: block;
  width: 7px;
  height: 7px;
  margin-left: 1px;
  border-radius: 50%;
  background: #fbfbfb;
}
.selected .dot {
  width: 9px;
  height: 9px;
  background: #fff;
}
.scrollbar {
  height: 9px;
  margin-top: auto;
  padding: 4px 0 0 10px;
  background: #f3f3f3;
}
.scrollbar i {
  display: block;
  width: 38%;
  height: 1px;
  background: #777;
}

/* docked panel tabs */
.panel-tabs {
  display: flex;
  flex-direction: column;
  width: 18px;
  padding-top: 5px;
}
.panel-list {
  flex: 1;
  display: grid;
  grid-auto-rows: 1fr;
  width: 16px;
  filter: drop-shadow(0 0 1px #8e939f);
}
.panel-list button {
  position: relative;
  flex-direction: column;
  justify-content: flex-start;
  min-height: 0;
  padding-top: 3px;
}
.panel-list button::before {
  content: "";
  position: absolute;
  inset: 0;
  z-index: -1;
  background: #fbfcfd;
  clip-path: polygon(0 0, 85% 0, 100% 5%, 100% 56%, 0 100%);
}
.panel-list svg { width: 9px; height: 9px; flex: none; }
.panel-list span {
  writing-mode: vertical-rl;
  font-size: 7px;
  line-height: 12px;
}
.panel-gear { height: 11px; padding-left: 8px; }

/* object snaps */
.osnap {
  display: flex;
  align-items: center;
  gap: 3px;
  height: 20px;
  padding: 2px 0 0 5px;
  border-top: 1px solid #d0d4dc;
  border-bottom: 1px solid #c6c9d0;
}
.osnap label {
  display: flex;
  align-items: center;
  gap: 1px;
}
.osnap input {
  appearance: none;
  position: relative;
  width: 8px;
  height: 8px;
  border: 1px solid #8a8d94;
  border-radius: 2px;
  background: #f7f8fa;
}
.osnap input:checked {
  border-color: #0b61b0;
  background: #0f67b8;
}
.osnap input:checked::after {
  content: "";
  position: absolute;
  left: 2px;
  top: 0;
  width: 2px;
  height: 4px;
  border: solid #fff;
  border-width: 0 1px 1px 0;
  transform: rotate(45deg);
}
.osnap .plain input { border-color: #e8eaee; }
.osnap .plain + .plain { margin-left: 7px; }

/* status bar */
.statusbar {
  display: flex;
  height: 11px;
  line-height: 11px;
}
.statusbar > * {
  display: flex;
  align-items: center;
  justify-content: center;
  flex: none;
  border-right: 1px solid #b5b8be;
  white-space: nowrap;
}
.statusbar .swatch { margin-right: 2px; }
.w-plane { width: 35px; }
.w-coord { width: 49px; }
.statusbar .w-layer {
  flex: 1;
  max-width: 140px;
  justify-content: flex-start;
  padding-left: 2px;
}
.w-four { width: 35px; }
.w-two { width: 22px; }
.w-three { width: 27px; }
.w-six { width: 50px; }
.on {
  background: #eef1f5;
  color: #000;
  font-weight: 700;
}
.statusbar .lens {
  padding-left: 1px;
  border: none;
}
```
